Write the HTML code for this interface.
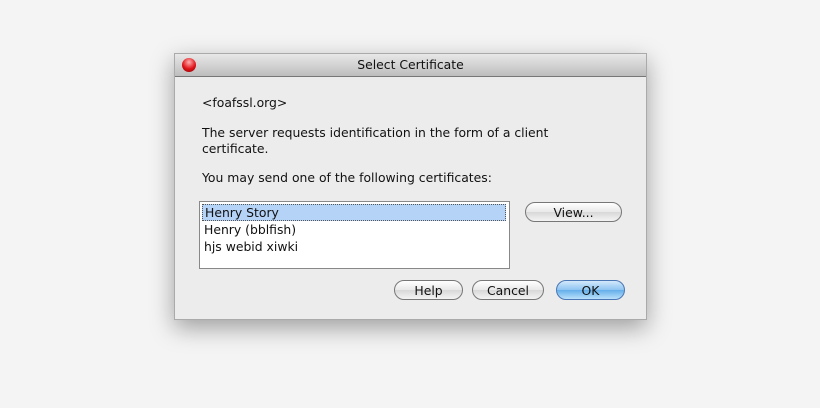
<!DOCTYPE html>
<html><head><style>
body{margin:0;width:820px;height:408px;background:#f4f4f4;font-family:"DejaVu Sans","Liberation Sans",sans-serif;font-size:12.4px;color:#111;position:relative;overflow:hidden}
.win{position:absolute;left:174px;top:53px;width:473px;height:267px;background:#ececec;box-shadow:0 8px 22px rgba(0,0,0,.35);border:1px solid #aaa;box-sizing:border-box}
.tb{height:22px;background:linear-gradient(#e8e8e8,#bdbdbd);border-bottom:1px solid #777;text-align:center;line-height:22px;font-size:12.4px}
.cl{position:absolute;left:7px;top:4px;width:14px;height:14px;border-radius:50%;background:radial-gradient(circle at 50% 30%,#ffb0b0,#e0141a 55%,#8a0000);}
.t{position:absolute;left:27px}
.list{position:absolute;left:24px;top:147px;width:311px;height:68px;background:#fff;border:1px solid #888;box-sizing:border-box}
.row{height:17px;line-height:17px;padding-left:4px}
.sel{background:#b5d3f7;border:1px dotted #555;margin:2px 3px 0 2px;line-height:15px;height:15px;padding-left:2px}
.b{position:absolute;height:20px;border:1px solid #777;border-radius:11px;background:linear-gradient(#fff,#e8e8e8 50%,#d8d8d8 51%,#f4f4f4);text-align:center;line-height:19px;box-sizing:border-box}
.ok{background:linear-gradient(#d4e9fb,#8cc4f1 50%,#64aeea 51%,#b9e1fb);border-color:#4a76b4}
</style></head><body>
<div class="win">
<div class="tb"><div class="cl"></div>Select Certificate</div>
<div class="t" style="top:41px">&lt;foafssl.org&gt;</div>
<div class="t" style="top:71px">The server requests identification in the form of a client</div>
<div class="t" style="top:87px">certificate.</div>
<div class="t" style="top:116px">You may send one of the following certificates:</div>
<div class="list"><div class="row sel">Henry Story</div><div class="row">Henry (bblfish)</div><div class="row">hjs webid xiwki</div></div>
<div class="b" style="left:350px;top:148px;width:97px">View...</div>
<div class="b" style="left:219px;top:226px;width:69px">Help</div>
<div class="b" style="left:297px;top:226px;width:72px">Cancel</div>
<div class="b ok" style="left:381px;top:226px;width:69px">OK</div>
</div>
</body></html>
